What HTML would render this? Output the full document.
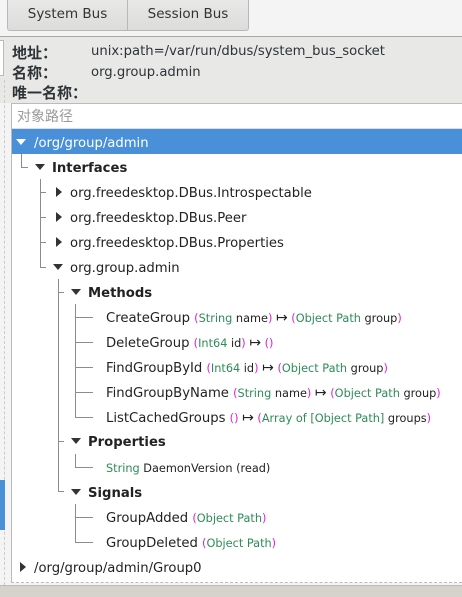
<!DOCTYPE html>
<html><head><meta charset="utf-8"><style>
*{margin:0;padding:0;box-sizing:border-box}
body{width:462px;height:597px;overflow:hidden;background:#f4f4f4;font-family:"DejaVu Sans","Liberation Sans","Noto Sans CJK SC",sans-serif;font-size:13.2px;color:#2e3436;position:relative}
.a{position:absolute;white-space:nowrap}
.cj{font-family:"Noto Sans CJK SC",sans-serif;font-weight:bold;font-size:15px;line-height:18px}
.tab{position:absolute;top:0;height:31px;border:1px solid #b8b8b8;border-top:none;background:linear-gradient(#e8e8e7,#dcdcdb);text-align:center;line-height:29px;font-size:13.5px;color:#333}
.hl{position:absolute;background:#8c8c8c}
.vl{position:absolute;width:1px;background:#8c8c8c}
.t{position:absolute;line-height:25px;height:25px;padding-top:2px;white-space:nowrap;color:#222}
.b{font-weight:bold}
.tri{position:absolute;width:0;height:0}
.dn{border-left:5px solid transparent;border-right:5px solid transparent;border-top:6px solid #333}
.rt{border-top:5px solid transparent;border-bottom:5px solid transparent;border-left:6px solid #333}
.s{font-size:11.3px}
.ar{font-size:14px}
.p{color:#e020e0}
.g{color:#2e8b57}
</style></head><body>
<div class="tab" style="left:7px;width:121px;border-radius:0 0 0 3px">System Bus</div>
<div class="tab" style="left:127px;width:122px;border-radius:0 0 3px 0">Session Bus</div>
<div class="a" style="left:0;top:36px;width:462px;height:1px;background:#a8a8a8"></div>
<div class="a" style="left:0;top:37px;width:462px;height:66px;background:#e8e8e7"></div>
<div class="a" style="left:0;top:40px;width:4px;height:36px;border:1px solid #bbb;border-left:none;background:#fff"></div>
<div class="a cj" style="left:12px;top:44px">地址：</div>
<div class="a" style="left:91px;top:44px">unix:path=/var/run/dbus/system_bus_socket</div>
<div class="a cj" style="left:12px;top:64px">名称：</div>
<div class="a" style="left:91px;top:65px">org.group.admin</div>
<div class="a cj" style="left:12px;top:84px">唯一名称：</div>
<div class="a" style="left:4px;top:80px;width:1px;height:505px;border-left:1px dashed #ccc"></div>
<div class="a" style="left:0;top:480px;width:5px;height:50px;background:#4a90d9"></div>
<div class="a" style="left:11px;top:103px;width:451px;height:480px;background:#fff;border-left:1px solid #bbb;border-top:1px solid #bbb;border-bottom:1px dashed #bbb"></div>
<div class="a" style="left:17px;top:105px;color:#999;line-height:22px;font-family:'Noto Sans CJK SC',sans-serif;font-size:14px">对象路径</div>
<div class="a" style="left:12px;top:128px;width:450px;height:1px;background:#ddd"></div>
<div class="a" style="left:12px;top:129px;width:450px;height:25px;background:#4a90d9"></div>
<div class="tri dn" style="left:16px;top:139px;border-top-color:#fff"></div>
<div class="t" style="left:34px;top:129px;color:#fff">/org/group/admin</div>
<div class="vl" style="left:21px;top:154px;height:13px"></div><div class="hl" style="left:21px;top:167px;width:7px;height:1px"></div>
<div class="tri dn" style="left:35px;top:164px"></div>
<div class="t b" style="left:52px;top:154px">Interfaces</div>
<div class="vl" style="left:40px;top:179px;height:88px"></div>
<div class="hl" style="left:40px;top:192px;width:6px;height:1px"></div>
<div class="hl" style="left:40px;top:217px;width:6px;height:1px"></div>
<div class="hl" style="left:40px;top:242px;width:6px;height:1px"></div>
<div class="hl" style="left:40px;top:267px;width:6px;height:1px"></div>
<div class="tri rt" style="left:56px;top:187px"></div><div class="t" style="left:70px;top:179px">org.freedesktop.DBus.Introspectable</div>
<div class="tri rt" style="left:56px;top:212px"></div><div class="t" style="left:70px;top:204px">org.freedesktop.DBus.Peer</div>
<div class="tri rt" style="left:56px;top:237px"></div><div class="t" style="left:70px;top:229px">org.freedesktop.DBus.Properties</div>
<div class="tri dn" style="left:53px;top:264px"></div><div class="t" style="left:70px;top:254px">org.group.admin</div>
<div class="vl" style="left:58px;top:279px;height:213px"></div>
<div class="hl" style="left:58px;top:292px;width:6px;height:1px"></div>
<div class="hl" style="left:58px;top:441px;width:6px;height:1px"></div>
<div class="hl" style="left:58px;top:491px;width:6px;height:1px"></div>
<div class="tri dn" style="left:71px;top:289px"></div><div class="t b" style="left:88px;top:279px">Methods</div>
<div class="tri dn" style="left:71px;top:438px"></div><div class="t b" style="left:88px;top:428px">Properties</div>
<div class="tri dn" style="left:71px;top:489px"></div><div class="t b" style="left:88px;top:479px">Signals</div>
<div class="vl" style="left:75px;top:304px;height:113px"></div>
<div class="hl" style="left:75px;top:317px;width:18px;height:1px"></div>
<div class="hl" style="left:75px;top:342px;width:18px;height:1px"></div>
<div class="hl" style="left:75px;top:367px;width:18px;height:1px"></div>
<div class="hl" style="left:75px;top:392px;width:18px;height:1px"></div>
<div class="hl" style="left:75px;top:417px;width:18px;height:1px"></div>
<div class="t" style="left:106px;top:304px">CreateGroup <span class="s"><span class="p">(</span><span class="g">String</span> name<span class="p">)</span> <span class="ar">↦</span> <span class="p">(</span><span class="g">Object Path</span> group<span class="p">)</span></span></div>
<div class="t" style="left:106px;top:329px">DeleteGroup <span class="s"><span class="p">(</span><span class="g">Int64</span> id<span class="p">)</span> <span class="ar">↦</span> <span class="p">()</span></span></div>
<div class="t" style="left:106px;top:354px">FindGroupById <span class="s"><span class="p">(</span><span class="g">Int64</span> id<span class="p">)</span> <span class="ar">↦</span> <span class="p">(</span><span class="g">Object Path</span> group<span class="p">)</span></span></div>
<div class="t" style="left:106px;top:379px">FindGroupByName <span class="s"><span class="p">(</span><span class="g">String</span> name<span class="p">)</span> <span class="ar">↦</span> <span class="p">(</span><span class="g">Object Path</span> group<span class="p">)</span></span></div>
<div class="t" style="left:106px;top:404px">ListCachedGroups <span class="s"><span class="p">()</span> <span class="ar">↦</span> <span class="p">(</span><span class="g">Array of [Object Path]</span> groups<span class="p">)</span></span></div>
<div class="vl" style="left:75px;top:454px;height:13px"></div><div class="hl" style="left:75px;top:467px;width:18px;height:1px"></div>
<div class="t s" style="left:106px;top:454px"><span class="g">String</span> DaemonVersion (read)</div>
<div class="vl" style="left:75px;top:504px;height:38px"></div>
<div class="hl" style="left:75px;top:517px;width:18px;height:1px"></div>
<div class="hl" style="left:75px;top:542px;width:18px;height:1px"></div>
<div class="t" style="left:106px;top:504px">GroupAdded <span class="s"><span class="p">(</span><span class="g">Object Path</span><span class="p">)</span></span></div>
<div class="t" style="left:106px;top:529px">GroupDeleted <span class="s"><span class="p">(</span><span class="g">Object Path</span><span class="p">)</span></span></div>
<div class="tri rt" style="left:20px;top:562px"></div><div class="t" style="left:34px;top:554px">/org/group/admin/Group0</div>
<div class="a" style="left:0;top:585px;width:462px;height:12px;background:#d6d3cc;border-top:1px solid #bbb"></div>
</body></html>
